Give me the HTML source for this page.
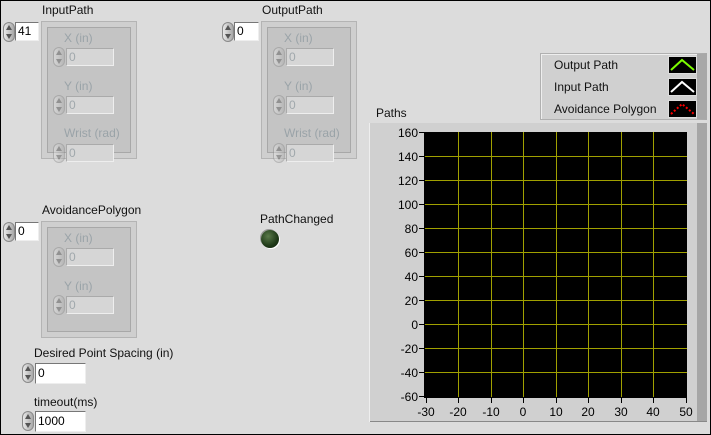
<!DOCTYPE html>
<html><head><meta charset="utf-8"><style>
*{margin:0;padding:0;box-sizing:border-box}
body{width:711px;height:435px;overflow:hidden;background:#dcdcdc;font-family:"Liberation Sans",sans-serif;font-size:12px;color:#000;position:relative}
.b{position:absolute;left:0;top:0;width:711px;height:435px;border:1px solid #000}
.a{position:absolute;white-space:nowrap}
.lbl{position:absolute;white-space:nowrap;font-size:12px;color:#111}
.dis{color:#9aa3a8}
.sp{position:absolute;width:12px;height:20px;border-radius:6px;background:linear-gradient(90deg,#e8e8e8,#a8a8a8);border:1px solid #8a8a8a}
.sp:before{content:"";position:absolute;left:2px;top:2px;border-left:3px solid transparent;border-right:3px solid transparent;border-bottom:5px solid #555}
.sp:after{content:"";position:absolute;left:2px;bottom:2px;border-left:3px solid transparent;border-right:3px solid transparent;border-top:5px solid #555}
.sp.d{opacity:.45}
.num{position:absolute;background:#fff;border-top:1px solid #777;border-left:1px solid #777;border-right:1px solid #eee;border-bottom:1px solid #eee;padding-left:2px;font-size:12px;line-height:17px}
.num.d{background:#d6d6d6;color:#a0a8ac;border-color:#aaa #eee #eee #aaa}
.fr{position:absolute;background:#c4c4c4;border:5px solid #cfcfcf;box-shadow:inset 0 0 0 1px #a8a8a8,0 0 0 1px #b4b4b4}
</style></head><body>
<div class="b"></div>

<div class="lbl" style="left:42px;top:3px">InputPath</div>
<div class="sp" style="left:3px;top:22px"></div>
<div class="num" style="left:15px;top:22px;width:24px;height:19px">41</div>
<div class="fr" style="left:42px;top:22px;width:94px;height:136px"></div>
<div class="lbl dis" style="left:64px;top:31px">X (in)</div>
<div class="sp d" style="left:53px;top:47px"></div><div class="num d" style="left:66px;top:48px;width:48px;height:18px">0</div>
<div class="lbl dis" style="left:64px;top:79px">Y (in)</div>
<div class="sp d" style="left:53px;top:95px"></div><div class="num d" style="left:66px;top:96px;width:48px;height:18px">0</div>
<div class="lbl dis" style="left:64px;top:126px">Wrist (rad)</div>
<div class="sp d" style="left:53px;top:143px"></div><div class="num d" style="left:66px;top:144px;width:48px;height:18px">0</div>

<div class="lbl" style="left:262px;top:3px">OutputPath</div>
<div class="sp" style="left:222px;top:22px"></div>
<div class="num" style="left:234px;top:22px;width:25px;height:19px">0</div>
<div class="fr" style="left:262px;top:22px;width:94px;height:136px"></div>
<div class="lbl dis" style="left:284px;top:31px">X (in)</div>
<div class="sp d" style="left:273px;top:47px"></div><div class="num d" style="left:286px;top:48px;width:48px;height:18px">0</div>
<div class="lbl dis" style="left:284px;top:79px">Y (in)</div>
<div class="sp d" style="left:273px;top:95px"></div><div class="num d" style="left:286px;top:96px;width:48px;height:18px">0</div>
<div class="lbl dis" style="left:284px;top:126px">Wrist (rad)</div>
<div class="sp d" style="left:273px;top:143px"></div><div class="num d" style="left:286px;top:144px;width:48px;height:18px">0</div>

<div class="lbl" style="left:42px;top:203px">AvoidancePolygon</div>
<div class="sp" style="left:3px;top:222px"></div>
<div class="num" style="left:15px;top:222px;width:24px;height:19px">0</div>
<div class="fr" style="left:42px;top:222px;width:94px;height:115px"></div>
<div class="lbl dis" style="left:64px;top:231px">X (in)</div>
<div class="sp d" style="left:53px;top:247px"></div><div class="num d" style="left:66px;top:248px;width:48px;height:18px">0</div>
<div class="lbl dis" style="left:64px;top:279px">Y (in)</div>
<div class="sp d" style="left:53px;top:295px"></div><div class="num d" style="left:66px;top:296px;width:48px;height:18px">0</div>

<div class="lbl" style="left:34px;top:346px">Desired Point Spacing (in)</div>
<div class="sp" style="left:22px;top:363px"></div>
<div class="num" style="left:35px;top:363px;width:51px;height:21px;line-height:19px">0</div>
<div class="lbl" style="left:34px;top:395px">timeout(ms)</div>
<div class="sp" style="left:22px;top:411px"></div>
<div class="num" style="left:35px;top:411px;width:51px;height:21px;line-height:19px">1000</div>

<div class="lbl" style="left:260px;top:212px">PathChanged</div>
<div class="a" style="left:261px;top:230px;width:18px;height:18px;border-radius:50%;background:radial-gradient(circle at 40% 35%,#5a7a4a,#1f3a18 60%,#0f1f0c);box-shadow:1px 1px 0 #fff,-1px -1px 0 #999"></div>

<div class="a" style="left:540px;top:53px;width:167px;height:67px;background:#d0d0d0;border:1px solid #b0b0b0;border-right:10px solid #a8a8a8;box-shadow:inset 1px 1px 0 #eee"></div>
<div class="lbl" style="left:554px;top:58px">Output Path</div>
<div class="lbl" style="left:554px;top:80px">Input Path</div>
<div class="lbl" style="left:554px;top:102px">Avoidance Polygon</div>
<svg class="a" style="left:0;top:0" width="711" height="435">
<g stroke="#fff" stroke-width="1"><rect x="668.5" y="56.5" width="28" height="17" fill="#000" stroke="#ddd"/><rect x="668.5" y="78.5" width="28" height="17" fill="#000" stroke="#ddd"/><rect x="668.5" y="100.5" width="28" height="17" fill="#000" stroke="#ddd"/></g>
<polyline points="671,70 682,60 694,70" fill="none" stroke="#7cfc00" stroke-width="2"/>
<polyline points="671,92 682,82 694,92" fill="none" stroke="#fff" stroke-width="2"/>
<polyline points="671,114 682,104 694,114" fill="none" stroke="#f00" stroke-width="2" stroke-dasharray="2,2"/>
<rect x="369" y="123" width="338" height="299" fill="#d0d0d0"/>
<rect x="697" y="123" width="10" height="299" fill="#a6a6a6"/>
<line x1="369" y1="421.5" x2="707" y2="421.5" stroke="#888"/>
<line x1="369.5" y1="123" x2="369.5" y2="422" stroke="#eee"/>
<rect x="425" y="132" width="262" height="265" fill="#000"/>
<g stroke="#a0a000" stroke-width="1">
<line x1="458.5" y1="132" x2="458.5" y2="397"/><line x1="491.5" y1="132" x2="491.5" y2="397"/><line x1="523.5" y1="132" x2="523.5" y2="397"/><line x1="556.5" y1="132" x2="556.5" y2="397"/><line x1="588.5" y1="132" x2="588.5" y2="397"/><line x1="621.5" y1="132" x2="621.5" y2="397"/><line x1="653.5" y1="132" x2="653.5" y2="397"/>
<line x1="425" y1="156.5" x2="687" y2="156.5"/><line x1="425" y1="180.5" x2="687" y2="180.5"/><line x1="425" y1="204.5" x2="687" y2="204.5"/><line x1="425" y1="228.5" x2="687" y2="228.5"/><line x1="425" y1="252.5" x2="687" y2="252.5"/><line x1="425" y1="276.5" x2="687" y2="276.5"/><line x1="425" y1="300.5" x2="687" y2="300.5"/><line x1="425" y1="324.5" x2="687" y2="324.5"/><line x1="425" y1="348.5" x2="687" y2="348.5"/><line x1="425" y1="372.5" x2="687" y2="372.5"/>
</g>
<g stroke="#000"><line x1="424.5" y1="132" x2="424.5" y2="398"/><line x1="425" y1="397.5" x2="687" y2="397.5"/>
<path d="M419 132.5h5M419 156.5h5M419 180.5h5M419 204.5h5M419 228.5h5M419 252.5h5M419 276.5h5M419 300.5h5M419 324.5h5M419 348.5h5M419 372.5h5M419 396.5h5"/>
<path d="M426.5 398v5M458.5 398v5M491.5 398v5M523.5 398v5M556.5 398v5M588.5 398v5M621.5 398v5M653.5 398v5M686.5 398v5"/></g>
<g font-family="Liberation Sans,sans-serif" font-size="12" fill="#000" text-anchor="end">
<text x="418" y="137">160</text><text x="418" y="161">140</text><text x="418" y="185">120</text><text x="418" y="209">100</text><text x="418" y="233">80</text><text x="418" y="257">60</text><text x="418" y="281">40</text><text x="418" y="305">20</text><text x="418" y="329">0</text><text x="418" y="353">-20</text><text x="418" y="377">-40</text><text x="418" y="401">-60</text></g>
<g font-family="Liberation Sans,sans-serif" font-size="12" fill="#000" text-anchor="middle">
<text x="426" y="416">-30</text><text x="458" y="416">-20</text><text x="491" y="416">-10</text><text x="523" y="416">0</text><text x="556" y="416">10</text><text x="588" y="416">20</text><text x="621" y="416">30</text><text x="653" y="416">40</text><text x="686" y="416">50</text></g>
</svg>
<div class="lbl" style="left:376px;top:106px">Paths</div>
</body></html>
